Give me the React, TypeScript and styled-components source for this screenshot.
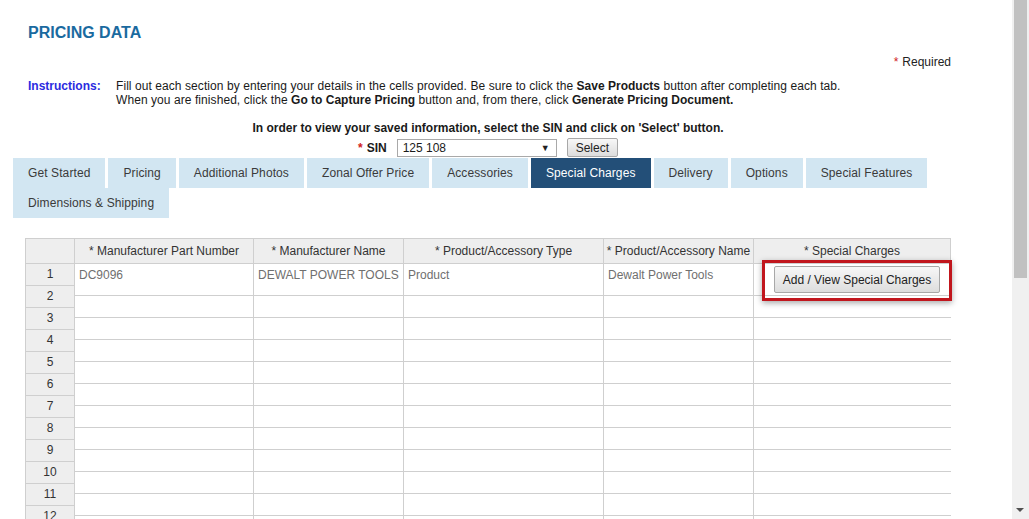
import React from "react";
import styled, { createGlobalStyle } from "styled-components";

const Global = createGlobalStyle`
  html, body { margin: 0; padding: 0; overflow: hidden; background: #fff; }
  body { font-family: "Liberation Sans", Arial, sans-serif; font-size: 12px; color: #222; }
`;

const Page = styled.div`
  width: 1012px;
  position: relative;
`;

const Header = styled.div`
  padding: 0 61px 0 25px;
`;

const Title = styled.h1`
  margin: 0;
  padding: 24px 0 0 3px;
  font-size: 16px;
  line-height: 18px;
  font-weight: bold;
  color: #1a6a9f;
`;

const RequiredLine = styled.div`
  text-align: right;
  margin-top: 13px;
  line-height: 14px;
  color: #222;
`;

const Star = styled.span`
  color: #d0201e;
  margin-right: 4px;
`;

const Instructions = styled.div`
  display: grid;
  grid-template-columns: 88px 1fr;
  padding-left: 3px;
  margin-top: 10px;
  line-height: 14px;
`;

const InstrLabel = styled.div`
  color: #2b2be0;
  font-weight: bold;
`;

const InstrText = styled.div`
  color: #1a1a1a;
  letter-spacing: 0.07px;
  b { font-weight: bold; letter-spacing: 0; }
`;

const SelectInfo = styled.div`
  text-align: center;
  font-weight: bold;
  margin-top: 14px;
  line-height: 14px;
  color: #1a1a1a;
`;

const SinRow = styled.div`
  display: flex;
  justify-content: center;
  align-items: center;
  gap: 10px;
  margin-top: 2px;
  height: 21px;
`;

const SinLabel = styled.span`
  font-weight: bold;
  color: #1a1a1a;
`;

const FakeSelect = styled.div`
  width: 160px;
  height: 18px;
  box-sizing: border-box;
  border: 1px solid #a9a9a9;
  display: flex;
  align-items: center;
  justify-content: space-between;
  padding: 0 6px 0 5px;
  color: #1a1a1a;
  background: #fff;
`;

const Arrow = styled.span`
  font-size: 9px;
  color: #222;
`;

const GrayButton = styled.button<{ $h: number }>`
  font-family: "Liberation Sans", Arial, sans-serif;
  font-size: 12px;
  color: #222;
  background: linear-gradient(#f7f7f7, #dddddd);
  border: 1px solid #a8a8a8;
  border-radius: 2px;
  padding: 0 8px;
  height: ${(p) => p.$h}px;
  cursor: pointer;
`;

const TabBar = styled.div`
  display: flex;
  flex-wrap: wrap;
  column-gap: 3px;
  row-gap: 0;
  padding-left: 13px;
  width: 980px;
`;

const Tab = styled.div<{ $active?: boolean }>`
  height: 30px;
  line-height: 30px;
  padding: 0 15px;
  letter-spacing: 0.1px;
  background: ${(p) => (p.$active ? "#234f78" : "#d2e6f2")};
  color: ${(p) => (p.$active ? "#fff" : "#3a3a3a")};
  white-space: nowrap;
`;

const TableArea = styled.div`
  display: flex;
  margin: 20px 0 0 25px;
`;

const RowNumCol = styled.div`
  width: 50px;
  box-sizing: border-box;
  border-left: 1px solid #cfcfcf;
  border-right: 1px solid #cfcfcf;
  background: #eeeeee;
`;

const Corner = styled.div`
  height: 26px;
  box-sizing: border-box;
  border-top: 1px solid #cfcfcf;
  border-bottom: 1px solid #cfcfcf;
`;

const RowNum = styled.div`
  height: 22px;
  box-sizing: border-box;
  border-bottom: 1px solid #cfcfcf;
  text-align: center;
  line-height: 21px;
  color: #333;
`;

const DataTable = styled.div`
  display: grid;
  grid-template-columns: 179px 150px 200px 150px 197px;
  align-content: start;
`;

const HeadCell = styled.div`
  height: 26px;
  box-sizing: border-box;
  border-top: 1px solid #cfcfcf;
  border-bottom: 1px solid #cfcfcf;
  border-right: 1px solid #cfcfcf;
  background: #eeeeee;
  text-align: center;
  line-height: 24px;
  color: #333;
  white-space: nowrap;
  overflow: hidden;
  &:last-child { border-right: none; }
`;

const Cell = styled.div<{ $h: number; $last?: boolean }>`
  height: ${(p) => p.$h}px;
  box-sizing: border-box;
  border-bottom: 1px solid #cfcfcf;
  border-right: ${(p) => (p.$last ? "none" : "1px solid #cfcfcf")};
  padding: 4px 4px 0 4px;
  line-height: 14px;
  color: #6f6f6f;
  white-space: nowrap;
  overflow: visible;
  position: relative;
`;

const Highlight = styled.div`
  position: absolute;
  left: 8px;
  top: -4px;
  width: 190px;
  height: 41px;
  box-sizing: border-box;
  border: 3px solid #c1161d;
  box-shadow: 0 2px 6px rgba(0, 0, 0, 0.35);
  display: flex;
  align-items: center;
  justify-content: center;
  padding-bottom: 2px;
  z-index: 2;
`;

const ScrollTrack = styled.div`
  position: fixed;
  top: 0;
  right: 0;
  width: 17px;
  height: 100%;
  background: #f0f0f0;
  z-index: 10;
`;

const ScrollThumb = styled.div`
  position: absolute;
  left: 2px;
  top: 0;
  width: 13px;
  height: 278px;
  background: #c1c1c1;
`;

const ScrollArrow = styled.div`
  position: absolute;
  left: 4px;
  bottom: 7px;
  width: 0;
  height: 0;
  border-left: 4px solid transparent;
  border-right: 4px solid transparent;
  border-top: 4px solid #505050;
`;

const tabs = [
  "Get Started",
  "Pricing",
  "Additional Photos",
  "Zonal Offer Price",
  "Accessories",
  "Special Charges",
  "Delivery",
  "Options",
  "Special Features",
  "Dimensions & Shipping",
];

const headers = [
  "* Manufacturer Part Number",
  "* Manufacturer Name",
  "* Product/Accessory Type",
  "* Product/Accessory Name",
  "* Special Charges",
];

const firstRow = ["DC9096", "DEWALT POWER TOOLS", "Product", "Dewalt Power Tools"];

export default function App() {
  const rows = Array.from({ length: 12 }, (_, i) => i + 1);
  return (
    <Page>
      <Global />
      <Header>
        <Title>PRICING DATA</Title>
        <RequiredLine>
          <Star>*</Star>Required
        </RequiredLine>
        <Instructions>
          <InstrLabel>Instructions:</InstrLabel>
          <InstrText>
            Fill out each section by entering your details in the cells provided. Be sure to click the{" "}
            <b>Save Products</b> button after completing each tab.
            <br />
            When you are finished, click the <b>Go to Capture Pricing</b> button and, from there, click{" "}
            <b>Generate Pricing Document.</b>
          </InstrText>
        </Instructions>
        <SelectInfo>In order to view your saved information, select the SIN and click on 'Select' button.</SelectInfo>
        <SinRow>
          <SinLabel>
            <Star>*</Star>SIN
          </SinLabel>
          <FakeSelect>
            <span>125 108</span>
            <Arrow>▼</Arrow>
          </FakeSelect>
          <GrayButton $h={19}>Select</GrayButton>
        </SinRow>
      </Header>
      <TabBar>
        {tabs.map((t) => (
          <Tab key={t} $active={t === "Special Charges"}>
            {t}
          </Tab>
        ))}
      </TabBar>
      <TableArea>
        <RowNumCol>
          <Corner />
          {rows.map((r) => (
            <RowNum key={r}>{r}</RowNum>
          ))}
        </RowNumCol>
        <DataTable>
          {headers.map((h) => (
            <HeadCell key={h}>{h}</HeadCell>
          ))}
          {firstRow.map((v, i) => (
            <Cell key={i} $h={32}>
              {v}
            </Cell>
          ))}
          <Cell $h={32} $last>
            <Highlight>
              <GrayButton $h={27}>Add / View Special Charges</GrayButton>
            </Highlight>
          </Cell>
          {rows.slice(1).map((r) =>
            headers.map((h, i) => <Cell key={`${r}-${i}`} $h={22} $last={i === 4} />)
          )}
        </DataTable>
      </TableArea>
      <ScrollTrack>
        <ScrollThumb />
        <ScrollArrow />
      </ScrollTrack>
    </Page>
  );
}
